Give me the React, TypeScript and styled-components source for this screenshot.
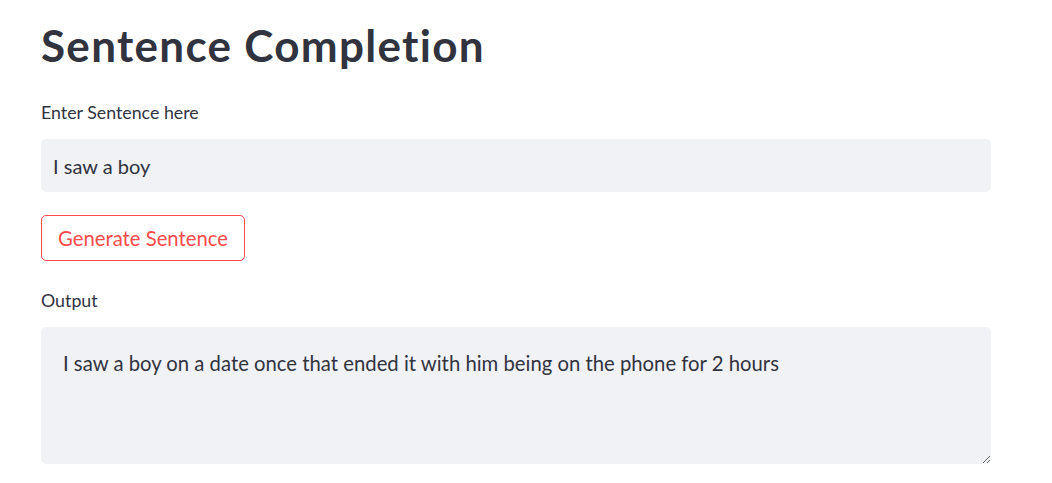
import React from 'react';
import styled, { createGlobalStyle } from 'styled-components';

const GlobalStyle = createGlobalStyle`
  body {
    margin: 0;
    background: #ffffff;
    font-family: Lato, "Noto Sans", sans-serif;
    font-variant-ligatures: none;
    color: #31333f;
  }
`;

const Page = styled.main`
  display: flex;
  flex-direction: column;
  width: 950px;
  padding: 0 0 0 41px;
`;

const Title = styled.h1`
  margin: 19px 0 0;
  font-size: 44px;
  line-height: 52px;
  font-weight: 700;
  letter-spacing: 1.3px;
  color: #31333f;
`;

const Field = styled.div<{ $top: number }>`
  display: flex;
  flex-direction: column;
  margin-top: ${(p) => p.$top}px;
`;

const Label = styled.label`
  font-size: 17.8px;
  line-height: 24px;
  margin-bottom: 15px;
`;

const TextInput = styled.input`
  box-sizing: border-box;
  height: 53px;
  width: 100%;
  border: none;
  border-radius: 5px;
  background: #f0f2f6;
  padding: 0 12px;
  font-family: inherit;
  font-size: 20px;
  color: #31333f;
  outline: none;
`;

const Button = styled.button`
  align-self: flex-start;
  margin-top: 23px;
  height: 46px;
  padding: 0 16px;
  border: 1px solid #ff4b4b;
  border-radius: 5px;
  background: #ffffff;
  color: #ff4b4b;
  font-family: inherit;
  font-size: 20.3px;
  cursor: pointer;
`;

const TextArea = styled.textarea`
  box-sizing: border-box;
  width: 100%;
  height: 137px;
  border: none;
  border-radius: 5px;
  background: #f0f2f6;
  padding: 21px 22px;
  font-family: inherit;
  font-size: 20.3px;
  line-height: 30px;
  color: #31333f;
  outline: none;
  resize: vertical;
`;

export default function App() {
  return (
    <>
      <GlobalStyle />
      <Page>
        <Title>Sentence Completion</Title>
        <Field $top={29}>
          <Label>Enter Sentence here</Label>
          <TextInput defaultValue="I saw a boy" />
        </Field>
        <Button>Generate Sentence</Button>
        <Field $top={27}>
          <Label>Output</Label>
          <TextArea
            readOnly
            defaultValue="I saw a boy on a date once that ended it with him being on the phone for 2 hours"
          />
        </Field>
      </Page>
    </>
  );
}
